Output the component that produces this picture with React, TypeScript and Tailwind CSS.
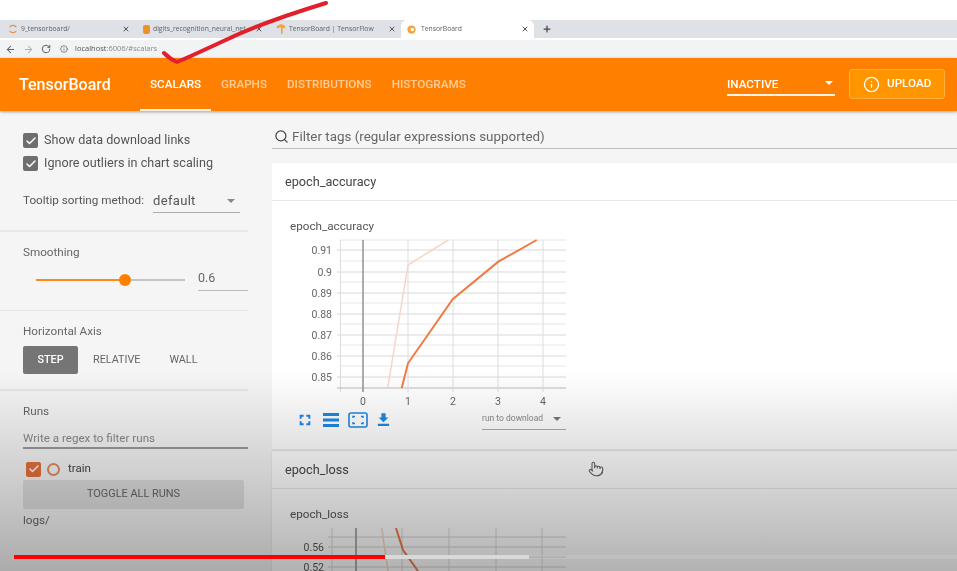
import { ArrowLeft, ArrowRight, RotateCw, Info, Search, Check, X, Plus, Pointer } from "lucide-react";

const tabs = [
  { title: "9_tensorboard/", width: "w-[135px]", icon: "spin" },
  { title: "digits_recognition_neural_net", width: "w-[133px]", icon: "book" },
  { title: "TensorBoard | TensorFlow", width: "w-[133px]", icon: "tf" },
];

function TabIcon({ kind }: { kind: string }) {
  if (kind === "spin") {
    return (
      <svg viewBox="0 0 12 12" className="h-[10px] w-[10px] shrink-0" fill="none" stroke="#e8924a" strokeWidth="1.5">
        <path d="M2 4a4.5 4.5 0 0 1 8 0M2 8a4.5 4.5 0 0 0 8 0" />
      </svg>
    );
  }
  if (kind === "book") {
    return <div className="h-[9px] w-[7px] shrink-0 rounded-[2px] bg-[#f0902a]" />;
  }
  return (
    <svg viewBox="0 0 12 12" className="h-[10px] w-[10px] shrink-0" fill="#f2a33a">
      <path d="M1 2.5 6 0l5 2.5v3L8 4.5V11L6 12V4L1 5.5z" />
    </svg>
  );
}

function ChromeBar() {
  return (
    <div className="shrink-0 blur-[0.4px]">
      <div className="h-5 bg-white" />
      <div className="flex h-[18px] items-center bg-[#dee1e6] font-['Open_Sans',sans-serif] text-[6.8px] text-[#5f6368]">
        {tabs.map((t) => (
          <div key={t.title} className={`flex ${t.width} items-center gap-[3px] pl-[8px] pr-[5px]`}>
            <TabIcon kind={t.icon} />
            <span className="min-w-0 flex-1 overflow-hidden whitespace-nowrap">{t.title}</span>
            <X size={8} strokeWidth={3} className="shrink-0 text-[#555]" />
          </div>
        ))}
        <div className="flex h-full w-[133px] items-center gap-[5px] rounded-t-md bg-white pl-[6px] pr-[5px]">
          <svg viewBox="0 0 12 12" className="h-[9px] w-[9px] shrink-0">
            <circle cx="6" cy="6" r="5.5" fill="#f2a33a" />
            <circle cx="7" cy="6" r="2.2" fill="#fff" />
          </svg>
          <span className="flex-1">TensorBoard</span>
          <X size={8} strokeWidth={3} className="text-[#555]" />
        </div>
        <Plus size={10} strokeWidth={3} className="ml-[8px] text-[#444]" />
      </div>
      <div className="flex h-[20px] items-center border-t-2 border-white bg-[#f2f3f5] pl-[5px]">
        <ArrowLeft size={11} strokeWidth={2.2} className="text-[#5f6368]" />
        <ArrowRight size={11} strokeWidth={2.2} className="ml-[7px] text-[#b0b3b8]" />
        <RotateCw size={10} strokeWidth={2.4} className="ml-[7px] text-[#5f6368]" />
        <div className="ml-[9px] flex items-center gap-[5px] font-['Open_Sans',sans-serif] text-[7.5px] text-[#555]">
          <Info size={8} />
          <span className="ml-[2px]">
            localhost<span className="text-[#888]">:6006/#scalars</span>
          </span>
        </div>
      </div>
    </div>
  );
}

function TopNav() {
  const links = ["GRAPHS", "DISTRIBUTIONS", "HISTOGRAMS"];
  return (
    <div className="relative z-10 flex h-[53px] shrink-0 items-stretch bg-[#ff7f00] font-medium text-white shadow-[0_1px_3px_rgba(0,0,0,0.35)] blur-[0.4px]">
      <div className="flex w-[140px] items-center pl-[19px] pt-[1px] text-[16px]">TensorBoard</div>
      <div className="relative flex items-center border-b-2 border-white/90 px-[10px] pt-[3px] text-[11.7px]">SCALARS</div>
      {links.map((l) => (
        <div key={l} className="flex items-center border-b-2 border-transparent px-[10px] pt-[3px] text-[11.7px] text-white/60">
          {l}
        </div>
      ))}
      <div className="ml-auto mt-[11px] flex h-[27px] w-[108px] items-center justify-between border-b-2 border-white/90 pr-[2px] pt-[7px] text-[11.7px]">
        <span>INACTIVE</span>
        <div className="mb-[4px] h-0 w-0 border-x-[4px] border-t-[4px] border-x-transparent border-t-white" />
      </div>
      <div className="ml-[14px] mr-[12px] mt-[11px] flex h-[30px] w-[96px] items-center gap-[7px] rounded-[3px] border border-[#ffb040] bg-[#ff9600] pl-[13px] text-[11.7px]">
        <Info size={17} strokeWidth={1.8} className="shrink-0" />
        <span>UPLOAD</span>
      </div>
    </div>
  );
}

function Checkbox({ label }: { label: string }) {
  return (
    <div className="flex h-[23px] items-center gap-[6px]">
      <div className="flex h-[15px] w-[15px] items-center justify-center rounded-[2px] bg-[#6e6e6e]">
        <Check size={12} strokeWidth={3} className="text-white" />
      </div>
      <span className="text-[12.6px] text-[#555]">{label}</span>
    </div>
  );
}

function Sidebar() {
  return (
    <div className="w-[248px] shrink-0 text-[#666] blur-[0.4px]">
      <div className="h-[121px] border-b-2 border-[#e8e8e8] pl-[23px] pt-[18px]">
        <Checkbox label="Show data download links" />
        <Checkbox label="Ignore outliers in chart scaling" />
        <div className="mt-[14px] flex items-end gap-[9px]">
          <span className="whitespace-nowrap pb-[3px] text-[11.7px] text-[#555]">Tooltip sorting method:</span>
          <div className="flex h-[24px] w-[87px] items-center justify-between border-b border-[#aaa] pr-[5px] text-[13px] tracking-wide text-[#555]">
            default
            <div className="h-0 w-0 border-x-[4px] border-t-[4px] border-x-transparent border-t-[#888]" />
          </div>
        </div>
      </div>
      <div className="h-[79px] border-b border-[#e4e4e4] pl-[23px] pt-[12px]">
        <div className="text-[11.7px] leading-[16px]">Smoothing</div>
        <div className="mt-[8px] flex items-center pl-[13px]">
          <div className="relative h-[2px] w-[149px] bg-[#c4c4c4]">
            <div className="h-full w-[89px] bg-[#ff8a1c]" />
            <div className="absolute left-[83px] top-[-5px] h-[12px] w-[12px] rounded-full bg-[#ff7f00]" />
          </div>
          <div className="ml-[13px] flex h-[23px] w-[50px] items-start border-b border-[#bbb] pt-[1px] text-[12.5px]">0.6</div>
        </div>
      </div>
      <div className="h-[80px] border-b-2 border-[#e6e6e6] pl-[23px] pt-[12px]">
        <div className="text-[11.7px] leading-[16px]">Horizontal Axis</div>
        <div className="mt-[7px] flex items-center text-[10.8px] font-medium">
          <div className="flex h-[28px] w-[55px] items-center justify-center rounded-[2px] bg-[#757575] text-white">STEP</div>
          <span className="ml-[15px] font-normal">RELATIVE</span>
          <span className="ml-[29px] font-normal">WALL</span>
        </div>
      </div>
      <div className="pl-[23px] pt-[12px]">
        <div className="text-[11.7px] leading-[16px]">Runs</div>
        <div className="mt-[11px] h-[19px] border-b-2 border-[#9a9a9a] text-[11.6px] leading-[16px] text-[#888]">
          Write a regex to filter runs
        </div>
        <div className="mt-[12px] flex h-[16px] items-center pl-[3px]">
          <div className="flex h-[15px] w-[15px] items-center justify-center rounded-[2px] bg-[#e8703a]">
            <Check size={12} strokeWidth={3} className="text-white" />
          </div>
          <div className="ml-[6px] h-[13px] w-[13px] rounded-full border-2 border-[#e08a5e]" />
          <span className="ml-[8px] text-[11.5px] text-[#444]">train</span>
        </div>
        <div className="mt-[3px] flex h-[29px] w-[221px] items-center justify-center rounded-[2px] bg-[#dedede] text-[10.9px] text-[#666]">
          TOGGLE ALL RUNS
        </div>
        <div className="mt-[3px] text-[11.7px] leading-[16px] text-[#666]">logs/</div>
      </div>
    </div>
  );
}

function AccuracyChart() {
  const ys = [250, 272, 293, 314, 335, 356, 377];
  const minor = [261, 282, 303, 324, 345, 366, 240];
  const labels = ["0.91", "0.9", "0.89", "0.88", "0.87", "0.86", "0.85"];
  const xs = [363, 408, 453, 498, 543];
  return (
    <svg viewBox="290 234 280 176" className="h-[176px] w-[280px]" fontFamily="Roboto, sans-serif">
      {ys.map((y, i) => (
        <g key={y}>
          <line x1="337" x2="566" y1={y} y2={y} stroke="#d8d8d8" />
          <text x="332" y={y + 3.5} textAnchor="end" fontSize="10.5" fill="#666">{labels[i]}</text>
        </g>
      ))}
      {minor.map((y) => (
        <line key={y} x1="340" x2="566" y1={y} y2={y} stroke="#e6e6e6" />
      ))}
      <line x1="340.5" x2="340.5" y1="240" y2="392" stroke="#ddd" />
      <line x1="337" x2="566" y1="388" y2="388" stroke="#bbb" />
      {xs.map((x, i) => (
        <g key={x}>
          <line x1={x} x2={x} y1="240" y2="392" stroke={i === 0 ? "#999" : "#ddd"} strokeWidth={i === 0 ? 1.6 : 1} />
          <text x={x} y="404.5" textAnchor="middle" fontSize="10.5" fill="#666">{i}</text>
        </g>
      ))}
      <path d="M387.7 388 408 265 448.3 240" fill="none" stroke="#f7d6c8" strokeWidth="1.5" />
      <path d="M401.7 388 408 363.3 452.7 299.3 498.3 261.7 536.7 240" fill="none" stroke="#ee7a45" strokeWidth="2" />
    </svg>
  );
}

function LossChart() {
  const xs = [332, 356, 402, 449, 496, 542];
  return (
    <svg viewBox="290 528 280 60" className="h-[60px] w-[280px]" fontFamily="Roboto, sans-serif">
      {[537, 547, 557, 567].map((y) => (
        <line key={y} x1="328" x2="566" y1={y} y2={y} stroke="#d4d4d4" />
      ))}
      {xs.map((x, i) => (
        <line key={x} x1={x} x2={x} y1="528" y2="588" stroke={i === 1 ? "#999" : "#d8d8d8"} strokeWidth={i === 1 ? 1.6 : 1} />
      ))}
      <text x="324" y="550.5" textAnchor="end" fontSize="10.5" fill="#555">0.56</text>
      <text x="324" y="570.5" textAnchor="end" fontSize="10.5" fill="#555">0.52</text>
      <path d="M381.7 528 388 571" fill="none" stroke="#f7d6c8" strokeWidth="1.5" />
      <path d="M396 528 403 550 418 571" fill="none" stroke="#ee7a45" strokeWidth="2" />
    </svg>
  );
}

function ChartToolbar() {
  return (
    <div className="flex h-[26px] items-start pl-[7px] text-[#1e88e5]">
      <svg viewBox="0 0 24 24" className="mt-[2px] h-[16px] w-[16px]" fill="currentColor">
        <path d="M7 14H4v6h6v-3H7v-3zm-3-4h3V7h3V4H4v6zm13 7h-3v3h6v-6h-3v3zM14 4v3h3v3h3V4h-6z" />
      </svg>
      <svg viewBox="0 0 16 16" className="ml-[10px] mt-[2px] h-[16px] w-[16px]" fill="currentColor">
        <path d="M0 1h16v3H0zM0 6.5h16v3H0zM0 12h16v3H0z" />
      </svg>
      <svg viewBox="0 0 20 16" className="ml-[9px] mt-[2px] h-[16px] w-[20px]" fill="none" stroke="currentColor">
        <rect x="1" y="1" width="18" height="14" rx="2" strokeWidth="1.6" />
        <path d="M5 6V4.5h2M15 6V4.5h-2M5 10v1.5h2M15 10v1.5h-2" strokeWidth="1.4" />
      </svg>
      <svg viewBox="0 0 24 24" className="ml-[7px] mt-[1px] h-[17px] w-[17px]" fill="currentColor">
        <path d="M19 9h-4V3H9v6H5l7 7 7-7zM4 18v3h16v-3H4z" />
      </svg>
      <div className="ml-[90px] flex h-[20px] w-[84px] items-center justify-between border-b border-[#aaa] pb-[2px] pr-[5px] text-[8.5px] text-[#888]">
        run to download
        <div className="h-0 w-0 border-x-[4px] border-t-[4px] border-x-transparent border-t-[#777]" />
      </div>
    </div>
  );
}

function Main() {
  return (
    <div className="ml-[24px] w-[685px] shrink-0 blur-[0.4px]">
      <div className="flex h-[38px] items-center gap-[3px] border-b border-[#bdbdbd] pl-[2px] pt-[14px] text-[13.4px] text-[#666]">
        <Search size={15} strokeWidth={2} className="text-[#444]" />
        <span className="leading-[16px]">Filter tags (regular expressions supported)</span>
      </div>
      <div className="mt-[14px] bg-white">
        <div className="flex h-[38px] items-center border-b border-[#e8e8e8] pl-[13px] text-[12.7px] text-[#444]">epoch_accuracy</div>
        <div className="h-[248px] pl-[18px] pt-[17px]">
          <div className="text-[11.7px] leading-[16px] text-[#555]">epoch_accuracy</div>
          <AccuracyChart />
          <ChartToolbar />
        </div>
      </div>
      <div className="mt-[2px] bg-white shadow-[0_-1px_2px_rgba(0,0,0,0.1)]">
        <div className="flex h-[38px] items-center border-b border-[#e8e8e8] pl-[13px] text-[12.7px] text-[#444]">epoch_loss</div>
        <div className="pl-[18px] pt-[17px]">
          <div className="text-[11.7px] leading-[16px] text-[#555]">epoch_loss</div>
          <div className="mt-[6px]">
            <LossChart />
          </div>
        </div>
      </div>
    </div>
  );
}

export default function App() {
  return (
    <div className="relative flex h-[571px] w-[957px] flex-col overflow-hidden bg-[#f5f5f5] font-['Roboto',sans-serif]">
      <ChromeBar />
      <TopNav />
      <div className="flex flex-1 overflow-hidden">
        <Sidebar />
        <Main />
      </div>

      {/* video player shade and scrub bar */}
      <div className="pointer-events-none absolute inset-x-0 bottom-0 h-[200px] bg-linear-to-b from-transparent to-black/30" />
      <div className="absolute left-[14px] right-0 top-[555px] h-[4px] bg-white/10">
        <div className="absolute left-0 top-0 h-full w-[515px] bg-[#d9d9d9]" />
        <div className="absolute left-0 top-0 h-full w-[371px] bg-[#f00]" />
      </div>
      <Pointer size={16} strokeWidth={1.6} className="absolute left-[588px] top-[461px] text-[#555]" />

      {/* hand drawn tick */}
      <svg viewBox="0 0 957 70" className="absolute left-0 top-0 z-20 h-[70px] w-[957px]" fill="none">
        <path d="M326 3C290 14 255 26 228 39C208 48 192 56 177 62C172 60 168 57 164 53" stroke="#e1202b" strokeWidth="4" strokeLinecap="round" strokeLinejoin="round" />
      </svg>
    </div>
  );
}
